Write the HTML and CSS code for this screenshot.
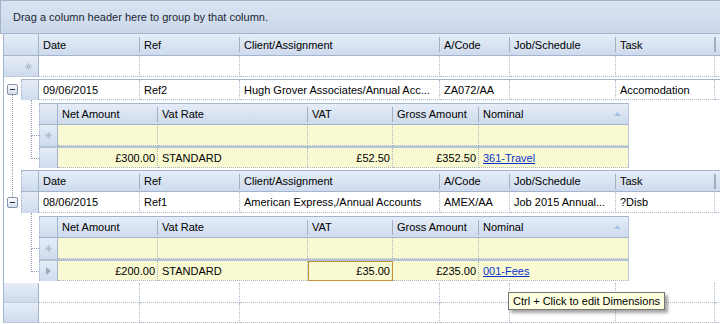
FILE: index.html
```html
<!DOCTYPE html>
<html>
<head>
<meta charset="utf-8">
<link rel="stylesheet" href="styles.css">
</head>
<body>
<div class="grid">
  <div class="group-panel">Drag a column header here to group by that column.</div>
  <div class="view">
    <div class="hdr mcols">
      <div class="ind"></div>
      <div class="hc">Date</div><div class="hc">Ref</div><div class="hc">Client/Assignment</div><div class="hc">A/Code</div><div class="hc">Job/Schedule</div><div class="hc">Task</div><div class="hc fill"></div>
    </div>
    <div class="newrow mcols">
      <div class="ind ind-r"><svg class="ast" width="7" height="7" viewBox="0 0 7 7"><path d="M3.5 0v7M0 3.5h7M1 1l5 5M6 1l-5 5" stroke="#b3bfcf" stroke-width="1"/></svg></div>
      <div class="c"></div><div class="c"></div><div class="c"></div><div class="c"></div><div class="c"></div><div class="c"></div><div class="c fill"></div>
    </div>

    <div class="master first">
      <div class="tree">
        <div class="exp"></div>
        <div class="tline"></div>
      </div>
      <div class="mbody">
        <div class="mrow mrow-top rcols">
          <div class="ind ind-s"></div>
          <div class="c">09/06/2015</div><div class="c">Ref2</div><div class="c">Hugh Grover Associates/Annual Acc...</div><div class="c">ZA072/AA</div><div class="c"></div><div class="c">Accomodation</div><div class="c fill"></div>
        </div>
        <div class="detail-wrap">
          <div class="conn"><div class="conn-a"></div><div class="conn-b"></div></div>
          <div class="detail">
            <div class="dhdr dcols">
              <div class="dind"></div>
              <div class="hc">Net Amount</div><div class="hc">Vat Rate</div><div class="hc">VAT</div><div class="hc">Gross Amount</div><div class="hc last">Nominal<svg class="sort" width="7" height="4" viewBox="0 0 7 4"><path d="M0 4L3.5 0L7 4Z" fill="#a6c2e6"/></svg></div>
            </div>
            <div class="dnew dcols">
              <div class="dind"><svg width="7" height="7" viewBox="0 0 7 7"><path d="M3.5 0v7M0 3.5h7M1 1l5 5M6 1l-5 5" stroke="#b3bfcf" stroke-width="1"/></svg></div>
              <div class="c"></div><div class="c"></div><div class="c"></div><div class="c"></div><div class="c"></div>
            </div>
            <div class="dsep"></div>
            <div class="ddata dcols">
              <div class="dind"></div>
              <div class="c num">£300.00</div><div class="c">STANDARD</div><div class="c num">£52.50</div><div class="c num">£352.50</div><div class="c"><a class="lnk">361-Travel</a></div>
            </div>
          </div>
        </div>
      </div>
    </div>

    <div class="master second">
      <div class="tree">
        <div class="tline-top"></div>
        <div class="exp exp2"></div>
      </div>
      <div class="mbody">
        <div class="rhdr rcols">
          <div class="ind ind-s"></div>
          <div class="hc">Date</div><div class="hc">Ref</div><div class="hc">Client/Assignment</div><div class="hc">A/Code</div><div class="hc">Job/Schedule</div><div class="hc">Task</div><div class="hc fill"></div>
        </div>
        <div class="mrow rcols">
          <div class="ind ind-s"></div>
          <div class="c">08/06/2015</div><div class="c">Ref1</div><div class="c">American Express,/Annual Accounts</div><div class="c">AMEX/AA</div><div class="c">Job 2015 Annual...</div><div class="c">?Disb</div><div class="c fill"></div>
        </div>
        <div class="detail-wrap">
          <div class="conn"><div class="conn-a"></div><div class="conn-b"></div></div>
          <div class="detail">
            <div class="dhdr dcols">
              <div class="dind"></div>
              <div class="hc">Net Amount</div><div class="hc">Vat Rate</div><div class="hc">VAT</div><div class="hc">Gross Amount</div><div class="hc last">Nominal<svg class="sort" width="7" height="4" viewBox="0 0 7 4"><path d="M0 4L3.5 0L7 4Z" fill="#a6c2e6"/></svg></div>
            </div>
            <div class="dnew dcols">
              <div class="dind"><svg width="7" height="7" viewBox="0 0 7 7"><path d="M3.5 0v7M0 3.5h7M1 1l5 5M6 1l-5 5" stroke="#b3bfcf" stroke-width="1"/></svg></div>
              <div class="c"></div><div class="c"></div><div class="c"></div><div class="c"></div><div class="c"></div>
            </div>
            <div class="dsep"></div>
            <div class="ddata dcols">
              <div class="dind"><svg width="5" height="8" viewBox="0 0 5 8"><path d="M0 0L5 4L0 8Z" fill="#9ea9b8"/></svg></div>
              <div class="c num">£200.00</div><div class="c">STANDARD</div><div class="c num focus">£35.00</div><div class="c num">£235.00</div><div class="c"><a class="lnk">001-Fees</a></div>
            </div>
          </div>
        </div>
      </div>
    </div>

    <div class="erow mcols">
      <div class="ind"></div>
      <div class="c"></div><div class="c"></div><div class="c"></div><div class="c"></div><div class="c"></div><div class="c"></div><div class="c fill"></div>
    </div>
    <div class="erow mcols">
      <div class="ind"></div>
      <div class="c"></div><div class="c"></div><div class="c"></div><div class="c"></div><div class="c"></div><div class="c"></div><div class="c fill"></div>
    </div>
  </div>
  <div class="tip">Ctrl + Click to edit Dimensions</div>
</div>
</body>
</html>
```

FILE: styles.css
```css
* { box-sizing: border-box; }
body { margin: 0; }
.grid {
  width: 720px; height: 324px; position: relative; overflow: hidden;
  background: #fff;
  font-family: "Liberation Sans", Arial, sans-serif; font-size: 11px; color: #000;
}
.group-panel {
  height: 34px;
  border-top: 1px solid #a3b4cb; border-bottom: 1px solid #a3b4cb; border-left: 1px solid #a3b4cb;
  background: linear-gradient(#d9e4f2, #cbd8ea);
  padding-left: 12px;
  display: flex; align-items: center;
  color: #1b2533;
}
.view { margin-left: 3px; border-left: 1px solid #a3b4cb; }

.mcols { display: grid; grid-template-columns: 35px 101px 100px 200px 70px 106px 99px 1fr; }
.rcols { display: grid; grid-template-columns: 18px 101px 100px 200px 70px 106px 99px 1fr; }
.dcols { display: grid; grid-template-columns: 19px 100px 150px 85px 86px 149px; }

.hgrad { background: linear-gradient(#e5edf8, #cedbed); }
.hdr, .rhdr, .dhdr { background: linear-gradient(#e5edf8, #cedbed); }
.hdr { height: 22px; border-bottom: 1px solid #a3b4cb; }
.rhdr { height: 22px; border-top: 1px solid #a3b4cb; border-bottom: 1px solid #a3b4cb; }
.hc {
  padding-left: 4px; display: flex; align-items: center; white-space: nowrap; overflow: hidden;
  background: linear-gradient(#a3afc0, #a3afc0) right center / 1px 15px no-repeat;
}
.hc.fill { background: linear-gradient(#a3afc0, #a3afc0) left center / 1px 15px no-repeat; }
.hc.last { background: none; justify-content: space-between; padding-right: 7px; }
.sort { margin-top: -1px; }

.ind {
  background: linear-gradient(#e5edf8, #cedbed);
  border-right: 1px solid #a3b4cb;
  display: flex; align-items: center; justify-content: flex-end;
}
.ind-r { padding-right: 6px; border-bottom: 1px solid #bfcbdb; }
.ind-s { border-left: 1px dotted #a3b1c6; }

.c {
  padding: 0 4px; display: flex; align-items: center; white-space: nowrap; overflow: hidden;
  border-right: 1px dotted #aab7ca; border-bottom: 1px dotted #aab7ca;
}
.c.fill { border-right: none; }
.num { justify-content: flex-end; padding-right: 2px; }

.newrow { height: 21px; }
.master { display: grid; grid-template-columns: 17px 1fr; }
.master.first { margin-top: 2px; }
.tree { display: flex; flex-direction: column; }
.exp {
  margin: 5px 0 0 3px; width: 11px; height: 11px; flex: none;
  border: 1px solid #8193ad; border-radius: 2px;
  background: linear-gradient(#fdfdfe, #d3dbe7);
  display: flex; align-items: center; justify-content: center;
}
.exp::before { content: ""; width: 5px; height: 1px; background: #24334a; }
.exp2 { margin-top: 0; }
.tline { flex: 1; margin-left: 8px; border-left: 1px dotted #8f9fb6; }
.tline-top { height: 27px; margin-left: 8px; border-left: 1px dotted #8f9fb6; }

.mrow { height: 21px; }
.mrow-top { border-top: 1px solid #a3b4cb; }

.detail-wrap { display: flex; margin-bottom: 2px; }
.conn { margin-left: 10px; width: 8px; flex: none; }
.conn-a { height: 36px; border-left: 1px dotted #8f9fb6; border-bottom: 1px dotted #8f9fb6; }
.conn-b { height: 23px; border-left: 1px dotted #8f9fb6; border-bottom: 1px dotted #8f9fb6; }
.detail { width: 590px; margin-top: 3px; border-right: 1px solid #b8c5d7; }
.dhdr { height: 22px; border-top: 1px solid #a3b4cb; border-bottom: 1px solid #a3b4cb; }
.dind {
  background: linear-gradient(#e5edf8, #cedbed);
  border-left: 1px dotted #a3b1c6; border-right: 1px solid #a3b4cb;
  display: flex; align-items: center; justify-content: center;
}
.dnew { height: 21px; background: #fafad2; }
.dsep { height: 2px; background: #b4c2d5; }
.ddata { height: 20px; background: #fafad2; }
.dnew .c:last-child, .ddata .c:last-child { border-right: none; }
.focus { border: 1px solid #c4913f; }
.lnk { color: #0a33cc; text-decoration: underline; }

.erow { height: 20px; }
.erow .ind { border-bottom: 1px solid #c3cedd; }

.tip {
  position: absolute; left: 508px; top: 292px; height: 18px;
  padding: 0 4px; border: 1px solid #767676; background: #ffffe1;
  box-shadow: 3px 3px 3px rgba(0,0,0,0.35);
  display: flex; align-items: center; white-space: nowrap; color: #000;
}
```
